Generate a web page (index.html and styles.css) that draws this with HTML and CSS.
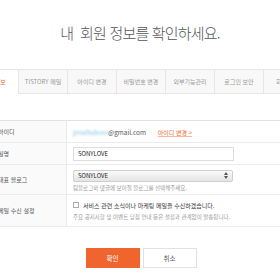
FILE: index.html
```html
<!doctype html>
<html lang="ko">
<head>
  <meta charset="UTF-8">
  <meta name="viewport" content="width=device-width, initial-scale=1">
  <title>내 정보</title>
  <link rel="stylesheet" href="styles.css">
</head>
<body>
<div class="page">
  <h1 class="title">내&nbsp; 회원 정보를 확인하세요.</h1>

  <div class="tabs">
    <a class="tab active">회원 정보</a>
    <a class="tab">TISTORY 메일</a>
    <a class="tab">아이디 변경</a>
    <a class="tab">비밀번호 변경</a>
    <a class="tab">외부기능관리</a>
    <a class="tab">로그인 보안</a>
    <a class="tab">회원 탈퇴</a>
  </div>

  <table class="info">
    <tr class="row-id">
      <th>아이디</th>
      <td>
        <span class="email"><span class="blur">jmsdtuboni</span>@gmail.com</span>
        <a class="change">아이디 변경 &gt;</a>
      </td>
    </tr>
    <tr class="row-name">
      <th>필명</th>
      <td><input class="field" value="SONYLOVE"></td>
    </tr>
    <tr class="row-blog">
      <th>대표 블로그</th>
      <td>
        <div class="select">
          <span>SONYLOVE</span>
          <svg width="4" height="7" viewBox="0 0 4 7"><path d="M0 3L2 0L4 3Z M0 4L2 7L4 4Z" fill="#555"/></svg>
        </div>
        <p class="help">팀블로그와 댓글에 보이질 블로그를 선택해주세요.</p>
      </td>
    </tr>
    <tr class="row-mail">
      <th>메일 수신 설정</th>
      <td>
        <label class="check"><span class="box"></span>서비스 관련 소식이나 마케팅 메일을 수신하겠습니다.</label>
        <p class="help">주요 공지사항 및 이벤트 당첨 안내 등은 설정과 관계없이 발송됩니다.</p>
      </td>
    </tr>
  </table>

  <div class="actions">
    <button class="btn btn-ok">확인</button>
    <button class="btn btn-cancel">취소</button>
  </div>
</div>
</body>
</html>
```

FILE: styles.css
```css
body {
  margin: 0;
  background: #fff;
  font-family: "Noto Sans CJK KR", "Noto Sans", sans-serif;
  overflow: hidden;
}
.page {
  width: 280px;
  height: 280px;
  overflow: hidden;
}
.title {
  margin: 0;
  padding-top: 24px;
  height: 69px;
  box-sizing: border-box;
  text-align: center;
  font-size: 15px;
  line-height: 18px;
  font-weight: 300;
  letter-spacing: -0.8px;
  color: #555;
}
.tabs {
  display: flex;
  margin-left: -30px;
  border-bottom: 1px solid #e2e2e2;
  height: 24px;
}
.tab {
  flex: 0 0 49px;
  box-sizing: border-box;
  height: 25px;
  border: 1px solid #e6e6e6;
  border-left: none;
  background: #f8f8f8;
  color: #999;
  font-size: 6px;
  display: flex;
  align-items: center;
  justify-content: center;
  white-space: nowrap;
}
.tab.active {
  background: #fff;
  border-bottom-color: #fff;
  color: #f0642d;
}
.info {
  margin: 26px 0 0 -20px;
  width: 300px;
  border-collapse: collapse;
  border-top: 1px solid #e2e2e2;
  font-size: 6px;
}
.info tr {
  border-bottom: 1px solid #ececec;
}
.info th {
  width: 68px;
  padding: 0 0 0 18px;
  text-align: left;
  font-weight: normal;
  color: #555;
  background: #fafafa;
  border-right: 1px solid #ececec;
}
.info td {
  padding: 0 0 0 6px;
  color: #444;
}
.row-id { height: 22px; }
.row-name { height: 22px; }
.row-blog { height: 30px; }
.row-mail { height: 32px; }
.email {
  color: #555;
  font-size: 6.5px;
}
.blur {
  color: #7fc4e8;
  filter: blur(1px);
}
.change {
  margin-left: 10px;
  color: #f0642d;
  text-decoration: underline;
  text-decoration-color: #f5b89f;
}
.field {
  display: block;
  width: 161px;
  height: 14px;
  box-sizing: border-box;
  border: 1px solid #ddd;
  padding: 0 4px;
  font: inherit;
  font-size: 6px;
  color: #222;
}
.select {
  margin-top: 3px;
  width: 160px;
  height: 12px;
  box-sizing: border-box;
  border: 1px solid #cfcfcf;
  border-radius: 2px;
  background: linear-gradient(#fbfbfb, #e4e4e4);
  display: flex;
  align-items: center;
  justify-content: space-between;
  padding: 0 4px;
  color: #222;
}
.help {
  margin: 2px 0 0;
  color: #999;
  font-size: 5.5px;
  line-height: 9px;
}
.check {
  display: flex;
  align-items: center;
  gap: 4px;
  color: #333;
  line-height: 11px;
}
.box {
  width: 4px;
  height: 4px;
  border: 1px solid #aaa;
  background: #fff;
}
.actions {
  margin-top: 21px;
  display: flex;
  justify-content: center;
  gap: 3px;
  padding-left: 2px;
}
.btn {
  width: 54px;
  height: 20px;
  font: inherit;
  font-size: 6.5px;
  border: 1px solid #e2e2e2;
  background: #fff;
  color: #555;
  padding: 0;
}
.btn-ok {
  background: #f0642d;
  border-color: #f0642d;
  color: #fff;
}
```
